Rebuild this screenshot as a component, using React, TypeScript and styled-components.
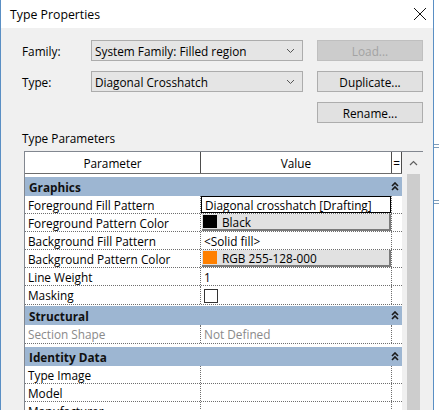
import React from "react";
import styled, { createGlobalStyle } from "styled-components";

const GlobalStyle = createGlobalStyle`
  html, body {
    margin: 0;
    padding: 0;
    background: #ffffff;
  }
  body {
    font-family: "Open Sans", "Noto Sans", "Liberation Sans", sans-serif;
    font-size: 11.8px;
    color: #000000;
  }
`;

const Page = styled.div`
  width: 439px;
  height: 410px;
  overflow: hidden;
  display: flex;
  flex-direction: row;
`;

const Dialog = styled.div`
  width: 434px;
  flex: none;
  display: flex;
  flex-direction: column;
  border-left: 1px solid #5a8fc4;
  border-right: 1px solid #5a8fc4;
  box-sizing: border-box;
  background: #f0f0f0;
  overflow: hidden;
  & > * {
    flex-shrink: 0;
  }
`;

const BehindApp = styled.div`
  flex: 1;
  background: #ffffff;
  display: flex;
  flex-direction: column;
  padding-top: 144px;
  gap: 52px;
  & > span {
    display: block;
    border-top: 1px solid #7f9db9;
    border-bottom: 1px solid #7f9db9;
    height: 2px;
  }
`;

const TitleBar = styled.div`
  height: 28px;
  background: #ffffff;
  display: flex;
  align-items: center;
  justify-content: space-between;
  padding: 0 6px 0 9px;
  font-size: 12.3px;
`;

const CloseIcon = styled.svg`
  width: 14px;
  height: 14px;
`;

const Body = styled.div`
  padding: 12px 0 0 21px;
  display: flex;
  flex-direction: column;
`;

const TopGrid = styled.div`
  display: grid;
  grid-template-columns: 69px 212px 14px 106px;
  grid-auto-rows: 21px;
  row-gap: 10px;
  align-items: center;
`;

const Label = styled.div`
  grid-column: 1;
`;

const Combo = styled.div`
  grid-column: 2;
  height: 21px;
  box-sizing: border-box;
  border: 1px solid #acacac;
  background: #e5e5e5;
  display: flex;
  align-items: center;
  justify-content: space-between;
  padding: 0 7px 0 3px;
`;

const Button = styled.div<{ disabled?: boolean }>`
  grid-column: 4;
  height: 21px;
  box-sizing: border-box;
  border: 1px solid ${(p) => (p.disabled ? "#bfbfbf" : "#adadad")};
  background: ${(p) => (p.disabled ? "#cccccc" : "#e1e1e1")};
  color: ${(p) => (p.disabled ? "#a3a3a3" : "#000000")};
  display: flex;
  align-items: center;
  justify-content: center;
`;

const SectionLabel = styled.div`
  margin-top: 7px;
  height: 16px;
  line-height: 16px;
  margin-bottom: 5px;
`;

const TableFrame = styled.div`
  margin-left: 2px;
  width: 398px;
  height: 300px;
  border: 1px solid #828790;
  border-right: none;
  background: #ffffff;
  display: flex;
  flex-direction: row;
`;

const Grid = styled.div`
  width: 377px;
  display: flex;
  flex-direction: column;
`;

const HeaderRow = styled.div`
  display: grid;
  grid-template-columns: 176px 191px 10px;
  height: 21px;
  border-bottom: 1px solid #6d6d6d;
  & > div {
    display: flex;
    align-items: center;
    justify-content: center;
    border-right: 1px solid #4d4d4d;
  }
`;

const GroupHeader = styled.div<{ $gap: number }>`
  margin-top: ${(p) => p.$gap}px;
  height: 19px;
  background: #9db6d2;
  display: flex;
  align-items: center;
  justify-content: space-between;
  padding: 0 3px 0 4px;
  font-weight: 700;
  color: #111111;
`;

const Row = styled.div<{ $h: number }>`
  display: grid;
  grid-template-columns: 176px 191px 10px;
  height: ${(p) => p.$h}px;
  border-bottom: 1px dotted #6e6e6e;
  box-sizing: border-box;
`;

const NameCell = styled.div<{ $muted?: boolean }>`
  border-right: 1px dotted #6e6e6e;
  padding-left: 3px;
  display: flex;
  align-items: center;
  color: ${(p) => (p.$muted ? "#8a8a8a" : "#000000")};
  white-space: nowrap;
  overflow: hidden;
`;

const ValueCell = styled.div<{ $muted?: boolean }>`
  border-right: 1px dotted #6e6e6e;
  display: flex;
  align-items: center;
  padding-left: 3px;
  color: ${(p) => (p.$muted ? "#8a8a8a" : "#000000")};
  white-space: nowrap;
  overflow: hidden;
`;

const TextBox = styled.div`
  margin-left: -3px;
  width: 190px;
  height: 17px;
  box-sizing: border-box;
  border: 1px solid #000000;
  display: flex;
  align-items: center;
  padding-left: 3px;
`;

const ColorButton = styled.div`
  margin-left: -2px;
  width: 189px;
  height: 17px;
  box-sizing: border-box;
  background: #e1e1e1;
  border-right: 2px solid #7a7a7a;
  border-bottom: 2px solid #7a7a7a;
  display: flex;
  align-items: center;
  gap: 5px;
  padding-left: 1px;
`;

const Swatch = styled.span<{ $color: string }>`
  width: 14px;
  height: 13px;
  background: ${(p) => p.$color};
  display: inline-block;
`;

const CheckBox = styled.span`
  width: 12px;
  height: 12px;
  border: 1px solid #333333;
  background: #ffffff;
  display: inline-block;
  margin-top: 2px;
`;

const ScrollColumn = styled.div`
  flex: 1;
  display: flex;
  flex-direction: column;
  background: #f0f0f0;
`;

const ScrollArrow = styled.div`
  height: 22px;
  display: flex;
  align-items: center;
  justify-content: center;
  background: #f0f0f0;
  padding-left: 2px;
`;

const ScrollThumb = styled.div`
  flex: 1;
  margin: 0 3px 0 5px;
  background: #cdcdcd;
`;

const Chevron = () => (
  <svg width="9" height="6" viewBox="0 0 9 6">
    <polyline points="1,5 4.5,1.5 8,5" fill="none" stroke="#606060" strokeWidth="1.2" />
  </svg>
);

const ComboArrow = () => (
  <svg width="9" height="6" viewBox="0 0 9 6">
    <polyline points="1,1 4.5,4.5 8,1" fill="none" stroke="#555555" strokeWidth="1" />
  </svg>
);

const DoubleUp = () => (
  <svg width="8" height="9" viewBox="0 0 8 9">
    <polyline points="1,4 4,1 7,4" fill="none" stroke="#1a1a1a" strokeWidth="1.6" />
    <polyline points="1,8 4,5 7,8" fill="none" stroke="#1a1a1a" strokeWidth="1.6" />
  </svg>
);

type Value =
  | { kind: "text"; text: string; muted?: boolean }
  | { kind: "box"; text: string }
  | { kind: "color"; text: string; color: string }
  | { kind: "check" };

interface Param {
  name: string;
  value?: Value;
  height?: number;
  muted?: boolean;
}

interface Group {
  title: string;
  gap: number;
  params: Param[];
}

const groups: Group[] = [
  {
    title: "Graphics",
    gap: 3,
    params: [
      { name: "Foreground Fill Pattern", value: { kind: "box", text: "Diagonal crosshatch [Drafting]" } },
      { name: "Foreground Pattern Color", value: { kind: "color", text: "Black", color: "#000000" } },
      { name: "Background Fill Pattern", value: { kind: "text", text: "<Solid fill>" } },
      { name: "Background Pattern Color", value: { kind: "color", text: "RGB 255-128-000", color: "#ff8000" } },
      { name: "Line Weight", value: { kind: "text", text: "1" } },
      { name: "Masking", value: { kind: "check" }, height: 19 },
    ],
  },
  {
    title: "Structural",
    gap: 1,
    params: [{ name: "Section Shape", value: { kind: "text", text: "Not Defined", muted: true }, muted: true, height: 19 }],
  },
  {
    title: "Identity Data",
    gap: 3,
    params: [{ name: "Type Image" }, { name: "Model" }, { name: "Manufacturer" }],
  },
];

const renderValue = (v?: Value) => {
  if (!v) return <ValueCell />;
  switch (v.kind) {
    case "box":
      return (
        <ValueCell>
          <TextBox>{v.text}</TextBox>
        </ValueCell>
      );
    case "color":
      return (
        <ValueCell>
          <ColorButton>
            <Swatch $color={v.color} />
            {v.text}
          </ColorButton>
        </ValueCell>
      );
    case "check":
      return (
        <ValueCell>
          <CheckBox />
        </ValueCell>
      );
    default:
      return <ValueCell $muted={v.muted}>{v.text}</ValueCell>;
  }
};

const App = () => {
  return (
    <>
      <GlobalStyle />
      <Page>
        <Dialog>
          <TitleBar>
            <span>Type Properties</span>
            <CloseIcon viewBox="0 0 14 14">
              <line x1="1" y1="1" x2="13" y2="13" stroke="#111" strokeWidth="1" />
              <line x1="13" y1="1" x2="1" y2="13" stroke="#111" strokeWidth="1" />
            </CloseIcon>
          </TitleBar>
          <Body>
            <TopGrid>
              <Label>Family:</Label>
              <Combo>
                System Family: Filled region
                <ComboArrow />
              </Combo>
              <Button disabled>Load...</Button>
              <Label>Type:</Label>
              <Combo>
                Diagonal Crosshatch
                <ComboArrow />
              </Combo>
              <Button>Duplicate...</Button>
              <Button>Rename...</Button>
            </TopGrid>
            <SectionLabel>Type Parameters</SectionLabel>
            <TableFrame>
              <Grid>
                <HeaderRow>
                  <div>Parameter</div>
                  <div>Value</div>
                  <div>=</div>
                </HeaderRow>
                {groups.map((g) => (
                  <React.Fragment key={g.title}>
                    <GroupHeader $gap={g.gap}>
                      {g.title}
                      <DoubleUp />
                    </GroupHeader>
                    {g.params.map((p) => (
                      <Row key={p.name} $h={p.height ?? 18}>
                        <NameCell $muted={p.muted}>{p.name}</NameCell>
                        {renderValue(p.value)}
                        <div />
                      </Row>
                    ))}
                  </React.Fragment>
                ))}
              </Grid>
              <ScrollColumn>
                <ScrollArrow>
                  <Chevron />
                </ScrollArrow>
                <ScrollThumb />
              </ScrollColumn>
            </TableFrame>
          </Body>
        </Dialog>
        <BehindApp>
          <span />
          <span />
        </BehindApp>
      </Page>
    </>
  );
};

export default App;
